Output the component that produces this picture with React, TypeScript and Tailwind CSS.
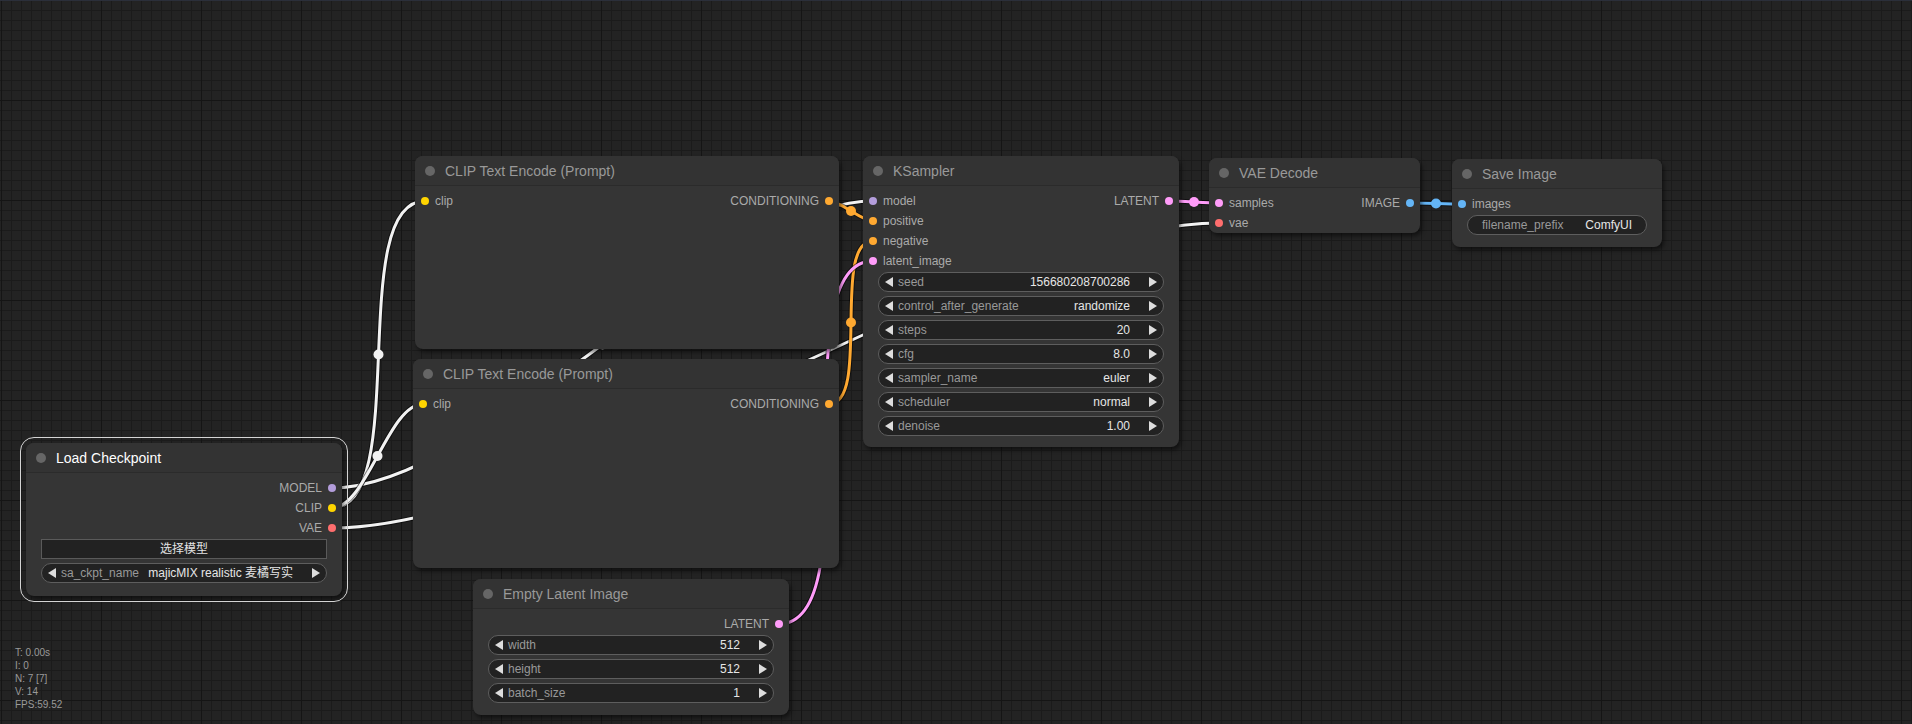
import React from "react";

type Slot = { name: string; dot: string };
type Widget =
  | { kind: "number"; label: string; value: string }
  | { kind: "text"; label: string; value: string }
  | { kind: "button"; value: string };

const C = {
  model: "bg-[#b39ddb]",
  clip: "bg-[#ffd500]",
  vae: "bg-[#ff6e6e]",
  cond: "bg-[#ffa931]",
  latent: "bg-[#ff9cf9]",
  image: "bg-[#64b5f6]",
};

function LeftArrow() {
  return (
    <svg width="8" height="10" viewBox="0 0 8 10" className="shrink-0">
      <polygon points="8,0 8,10 0,5" fill="#dddddd" />
    </svg>
  );
}
function RightArrow() {
  return (
    <svg width="8" height="10" viewBox="0 0 8 10" className="shrink-0">
      <polygon points="0,0 0,10 8,5" fill="#dddddd" />
    </svg>
  );
}

function WidgetRow({ w }: { w: Widget }) {
  if (w.kind === "button") {
    return (
      <div className="h-[20px] border border-[#5a5a5a] bg-[#222222] flex items-center justify-center text-[12px] text-[#e4e4e4]">
        {w.value}
      </div>
    );
  }
  if (w.kind === "text") {
    return (
      <div className="h-[20px] rounded-full border border-[#5e5e5e] bg-[#222222] flex items-center px-[14px] text-[12px] whitespace-nowrap">
        <span className="text-[#999999]">{w.label}</span>
        <span className="ml-auto text-[#e6e6e6]">{w.value}</span>
      </div>
    );
  }
  return (
    <div className="h-[20px] rounded-full border border-[#5e5e5e] bg-[#222222] flex items-center px-[6px] text-[12px] whitespace-nowrap">
      <LeftArrow />
      <span className="ml-[5px] shrink-0 text-[#999999]">{w.label}</span>
      <span className="ml-auto pl-[8px] min-w-0 overflow-hidden text-[#e6e6e6]">{w.value}</span>
      <span className="ml-[19px] flex items-center">
        <RightArrow />
      </span>
    </div>
  );
}

function GraphNode({
  pos,
  title,
  selected,
  inputs = [],
  outputs = [],
  widgets = [],
}: {
  pos: string;
  title: string;
  selected?: boolean;
  inputs?: Slot[];
  outputs?: Slot[];
  widgets?: Widget[];
}) {
  const rows = Math.max(inputs.length, outputs.length);
  return (
    <div
      className={`absolute ${pos} rounded-[8px] bg-[#353535] shadow-[2px_3px_4px_rgba(0,0,0,0.5)] flex flex-col`}
    >
      {selected && (
        <div className="pointer-events-none absolute -inset-[6px] rounded-[14px] border-[1.5px] border-[#d4d4d4]" />
      )}
      <div className="h-[30px] shrink-0 flex items-center gap-[10px] pl-[10px] rounded-t-[8px] bg-[#333333] border-b border-[#2b2b2b]">
        <span className="w-[10px] h-[10px] rounded-full bg-[#666666]" />
        <span className={`text-[14px] translate-y-[1px] ${selected ? "text-white" : "text-[#999999]"}`}>{title}</span>
      </div>
      <div className="pt-[5px] flex flex-col">
        {Array.from({ length: rows }).map((_, i) => (
          <div key={i} className="h-[20px] flex items-center justify-between text-[12px] text-[#aaaaaa]">
            {inputs[i] ? (
              <div className="flex items-center gap-[6px] pl-[6px]">
                <span className={`w-[8px] h-[8px] rounded-full ${inputs[i].dot}`} />
                <span>{inputs[i].name}</span>
              </div>
            ) : (
              <div />
            )}
            {outputs[i] ? (
              <div className="flex items-center gap-[6px] pr-[6px]">
                <span>{outputs[i].name}</span>
                <span className={`w-[8px] h-[8px] rounded-full ${outputs[i].dot}`} />
              </div>
            ) : (
              <div />
            )}
          </div>
        ))}
        {widgets.length > 0 && (
          <div className="mt-[1px] px-[15px] flex flex-col gap-[4px]">
            {widgets.map((w, i) => (
              <WidgetRow key={i} w={w} />
            ))}
          </div>
        )}
      </div>
    </div>
  );
}

type Link = { a: [number, number]; b: [number, number]; color: string };

const links: Link[] = [
  { a: [332, 488], b: [873, 201], color: "#f2f2f2" },
  { a: [332, 528], b: [1219, 223], color: "#f2f2f2" },
  { a: [332, 508], b: [425, 201], color: "#f2f2f2" },
  { a: [332, 508], b: [423, 404], color: "#f2f2f2" },
  { a: [829, 201], b: [873, 221], color: "#ffa931" },
  { a: [829, 404], b: [873, 241], color: "#ffa931" },
  { a: [779, 624], b: [873, 261], color: "#ff9cf9" },
  { a: [1169, 201], b: [1219, 203], color: "#ff9cf9" },
  { a: [1410, 203], b: [1462, 204], color: "#64b5f6" },
];

function linkGeom(l: Link) {
  const [ax, ay] = l.a;
  const [bx, by] = l.b;
  const o = Math.hypot(bx - ax, by - ay) * 0.25;
  const c1x = ax + o,
    c2x = bx - o;
  const d = `M${ax},${ay} C${c1x},${ay} ${c2x},${by} ${bx},${by}`;
  const mx = (ax + 3 * c1x + 3 * c2x + bx) / 8;
  const my = (ay + 3 * ay + 3 * by + by) / 8;
  return { d, mx, my };
}

function Canvas() {
  return (
    <svg className="absolute inset-0" width="1912" height="724">
      <defs>
        <pattern id="minor" x="1" y="0" width="10" height="10" patternUnits="userSpaceOnUse">
          <rect x="0" y="0" width="1" height="10" fill="#1b1b1b" />
          <rect x="0" y="0" width="10" height="1" fill="#1b1b1b" />
        </pattern>
        <pattern id="major" x="1" y="0" width="100" height="100" patternUnits="userSpaceOnUse">
          <rect x="0" y="0" width="1" height="100" fill="#151515" />
          <rect x="0" y="0" width="100" height="1" fill="#151515" />
        </pattern>
      </defs>
      <rect width="1912" height="724" fill="#232323" />
      <rect width="1912" height="724" fill="url(#minor)" />
      <rect width="1912" height="724" fill="url(#major)" />
      <rect width="1912" height="1" fill="#2b2f3a" />
      {links.map((l, i) => {
        const g = linkGeom(l);
        return (
          <g key={i}>
            <path d={g.d} fill="none" stroke="rgba(0,0,0,0.5)" strokeWidth="5" />
            <path d={g.d} fill="none" stroke={l.color} strokeWidth="3" />
            <circle cx={g.mx} cy={g.my} r="5" fill={l.color} />
          </g>
        );
      })}
    </svg>
  );
}

export default function App() {
  return (
    <div className="relative w-[1912px] h-[724px] overflow-hidden bg-[#232323] font-['Liberation_Sans','Noto_Sans_CJK_SC',sans-serif]">
      <Canvas />

      <GraphNode
        pos="left-[415px] top-[156px] w-[424px] h-[193px]"
        title="CLIP Text Encode (Prompt)"
        inputs={[{ name: "clip", dot: C.clip }]}
        outputs={[{ name: "CONDITIONING", dot: C.cond }]}
      />
      <GraphNode
        pos="left-[413px] top-[359px] w-[426px] h-[209px]"
        title="CLIP Text Encode (Prompt)"
        inputs={[{ name: "clip", dot: C.clip }]}
        outputs={[{ name: "CONDITIONING", dot: C.cond }]}
      />
      <GraphNode
        pos="left-[863px] top-[156px] w-[316px] h-[291px]"
        title="KSampler"
        inputs={[
          { name: "model", dot: C.model },
          { name: "positive", dot: C.cond },
          { name: "negative", dot: C.cond },
          { name: "latent_image", dot: C.latent },
        ]}
        outputs={[{ name: "LATENT", dot: C.latent }]}
        widgets={[
          { kind: "number", label: "seed", value: "156680208700286" },
          { kind: "number", label: "control_after_generate", value: "randomize" },
          { kind: "number", label: "steps", value: "20" },
          { kind: "number", label: "cfg", value: "8.0" },
          { kind: "number", label: "sampler_name", value: "euler" },
          { kind: "number", label: "scheduler", value: "normal" },
          { kind: "number", label: "denoise", value: "1.00" },
        ]}
      />
      <GraphNode
        pos="left-[1209px] top-[158px] w-[211px] h-[75px]"
        title="VAE Decode"
        inputs={[
          { name: "samples", dot: C.latent },
          { name: "vae", dot: C.vae },
        ]}
        outputs={[{ name: "IMAGE", dot: C.image }]}
      />
      <GraphNode
        pos="left-[1452px] top-[159px] w-[210px] h-[88px]"
        title="Save Image"
        inputs={[{ name: "images", dot: C.image }]}
        widgets={[{ kind: "text", label: "filename_prefix", value: "ComfyUI" }]}
      />
      <GraphNode
        pos="left-[473px] top-[579px] w-[316px] h-[136px]"
        title="Empty Latent Image"
        outputs={[{ name: "LATENT", dot: C.latent }]}
        widgets={[
          { kind: "number", label: "width", value: "512" },
          { kind: "number", label: "height", value: "512" },
          { kind: "number", label: "batch_size", value: "1" },
        ]}
      />
      <GraphNode
        pos="left-[26px] top-[443px] w-[316px] h-[153px]"
        title="Load Checkpoint"
        selected
        outputs={[
          { name: "MODEL", dot: C.model },
          { name: "CLIP", dot: C.clip },
          { name: "VAE", dot: C.vae },
        ]}
        widgets={[
          { kind: "button", value: "选择模型" },
          { kind: "number", label: "sa_ckpt_name", value: "majicMIX realistic 麦橘写实" },
        ]}
      />

      <div className="absolute left-[15px] top-[646px] text-[10px] leading-[13px] text-[#9a9a9a]">
        <div>T: 0.00s</div>
        <div>I: 0</div>
        <div>N: 7 [7]</div>
        <div>V: 14</div>
        <div>FPS:59.52</div>
      </div>
    </div>
  );
}
